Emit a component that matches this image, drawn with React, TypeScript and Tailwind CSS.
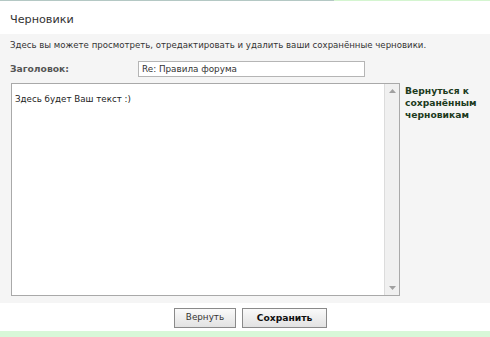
import React from "react";

const font = { fontFamily: '"DejaVu Sans", Verdana, sans-serif' };

export default function App() {
  return (
    <div className="w-[490px] h-[337px] bg-white text-[#333] flex flex-col overflow-hidden" style={font}>
      {/* top strip */}
      <div className="flex h-px shrink-0">
        <div className="w-[334px] bg-[#b4c8c4]"></div>
        <div className="flex-1 bg-[#d4f5d0]"></div>
      </div>

      {/* Header */}
      <div className="h-[33px] shrink-0 px-[10px] pt-[12px] text-[11.2px] leading-[14px] text-[#333]">
        Черновики
      </div>

      {/* Panel */}
      <div className="bg-[#f5f5f5] h-[269px] shrink-0 flex flex-col px-[10px] pt-[5px]">
        <p className="text-[8.6px] leading-[12px] text-[#333]">
          Здесь вы можете просмотреть, отредактировать и удалить ваши сохранённые черновики.
        </p>

        <div className="flex items-center mt-[10px] h-[16px]">
          <span className="w-[128px] text-[9.2px] font-bold text-[#555]">Заголовок:</span>
          <div className="w-[227px] h-[16px] bg-white border border-[#b5b5b5] px-[3px] text-[8.8px] leading-[14px] text-[#333]">
            Re: Правила форума
          </div>
        </div>

        <div className="flex mt-[6px] gap-[5px]">
          <div className="ml-px w-[389px] h-[213px] bg-white border border-[#a9a9a9] flex">
            <div className="flex-1 px-[3px] pt-[9px] text-[8.7px] leading-[12px] text-[#222]">
              Здесь будет Ваш текст :)
            </div>
            <div className="w-[15px] bg-[#f0f0f0] border-l border-[#dcdcdc] flex flex-col items-center justify-between py-[5px]">
              <svg width="7" height="4" viewBox="0 0 7 4"><path d="M0 4 L3.5 0 L7 4Z" fill="#a0a0a0" /></svg>
              <svg width="7" height="4" viewBox="0 0 7 4"><path d="M0 0 L3.5 4 L7 0Z" fill="#a0a0a0" /></svg>
            </div>
          </div>
          <div className="pt-[2px] text-[9.2px] leading-[12px] font-bold text-[#1d3b1d]">
            Вернуться к<br />сохранённым<br />черновикам
          </div>
        </div>
      </div>

      {/* Buttons */}
      <div className="flex justify-center gap-[6px] pt-[5px] pl-[11px]">
        <button className="w-[62px] h-[20px] border border-[#8a8a8a] bg-gradient-to-b from-[#fafafa] to-[#e2e2e2] text-[8.8px] text-[#333]">
          Вернуть
        </button>
        <button className="w-[85px] h-[20px] border border-[#8a8a8a] bg-gradient-to-b from-[#fafafa] to-[#e2e2e2] text-[9.2px] font-bold text-[#111]">
          Сохранить
        </button>
      </div>

      <div className="mt-auto h-[6px] bg-[#d8f7d8]"></div>
    </div>
  );
}
